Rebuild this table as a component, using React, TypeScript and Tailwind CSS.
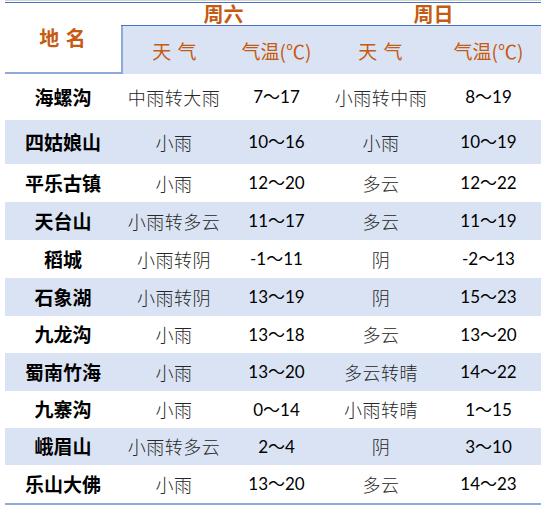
import React from 'react';

const rows: [string, string, string, string, string][] = [
  ['海螺沟', '中雨转大雨', '7～17', '小雨转中雨', '8～19'],
  ['四姑娘山', '小雨', '10～16', '小雨', '10～19'],
  ['平乐古镇', '小雨', '12～20', '多云', '12～22'],
  ['天台山', '小雨转多云', '11～17', '多云', '11～19'],
  ['稻城', '小雨转阴', '-1～11', '阴', '-2～13'],
  ['石象湖', '小雨转阴', '13～19', '阴', '15～23'],
  ['九龙沟', '小雨', '13～18', '多云', '13～20'],
  ['蜀南竹海', '小雨', '13～20', '多云转晴', '14～22'],
  ['九寨沟', '小雨', '0～14', '小雨转晴', '1～15'],
  ['峨眉山', '小雨转多云', '2～4', '阴', '3～10'],
  ['乐山大佛', '小雨', '13～20', '多云', '14～23'],
];

// row heights read off the screenshot
const heights = ['h-[46px]', 'h-[44px]', 'h-[38px]', 'h-[38px]', 'h-[38px]', 'h-[38px]', 'h-[37px]', 'h-[38px]', 'h-[37px]', 'h-[37px]', 'h-[38px]'];

const cols = 'grid grid-cols-[116px_106px_99px_110px_105px]';
const cjk = "font-['Noto_Sans_CJK_SC',sans-serif]";
const num = "font-['Lato','Noto_Sans_CJK_SC',sans-serif]";

export default function App() {
  return (
    <div className="w-[546px] h-[518px] bg-white px-[5px]">
      <div className="h-px bg-[#d4d4d4]" />
      <div className="h-px mt-px bg-[#4472c4]" />

      {/* 表头 */}
      <div className={`${cols} grid-rows-[23px_48px]`}>
        <div className={`row-span-2 flex items-center justify-center border-b-2 border-[#8eaadb] text-[20px] font-bold tracking-[1px] text-[#c55a11] ${cjk}`}>
          地&nbsp;名
        </div>
        <div className={`col-span-2 flex items-center justify-center border-b border-[#4472c4] text-[20px] font-bold leading-none text-[#c55a11] ${cjk}`}>
          周六
        </div>
        <div className={`col-span-2 flex items-center justify-center border-b border-[#4472c4] text-[20px] font-bold leading-none text-[#c55a11] ${cjk}`}>
          周日
        </div>
        <div className={`flex items-center justify-center bg-[#dae3f3] border-l-2 border-[#8eaadb] pt-[3px] text-[19px] tracking-[1px] text-[#c55a11] ${cjk}`}>
          天&nbsp;气
        </div>
        <div className={`flex items-center justify-center bg-[#dae3f3] pt-[3px] text-[19px] text-[#c55a11] ${cjk}`}>
          气温(℃)
        </div>
        <div className={`flex items-center justify-center bg-[#dae3f3] pt-[3px] text-[19px] tracking-[1px] text-[#c55a11] ${cjk}`}>
          天&nbsp;气
        </div>
        <div className={`flex items-center justify-center bg-[#dae3f3] pt-[3px] text-[19px] text-[#c55a11] ${cjk}`}>
          气温(℃)
        </div>
      </div>

      {/* 数据 */}
      {rows.map((r, i) => (
        <div key={r[0]} className={`${cols} ${heights[i]} ${i % 2 === 1 ? 'bg-[#dae3f3]' : 'bg-white'}`}>
          <div className={`flex items-center justify-center text-[19px] font-bold text-black ${cjk}`}>{r[0]}</div>
          <div className={`flex items-center justify-center text-[18px] font-light tracking-[0.5px] text-[#262626] ${cjk}`}>{r[1]}</div>
          <div className={`flex items-center justify-center text-[17px] text-black ${num}`}>{r[2]}</div>
          <div className={`flex items-center justify-center text-[18px] font-light tracking-[0.5px] text-[#262626] ${cjk}`}>{r[3]}</div>
          <div className={`flex items-center justify-center text-[17px] text-black ${num}`}>{r[4]}</div>
        </div>
      ))}
      <div className="h-[2px] bg-[#8faadc]" />
    </div>
  );
}
